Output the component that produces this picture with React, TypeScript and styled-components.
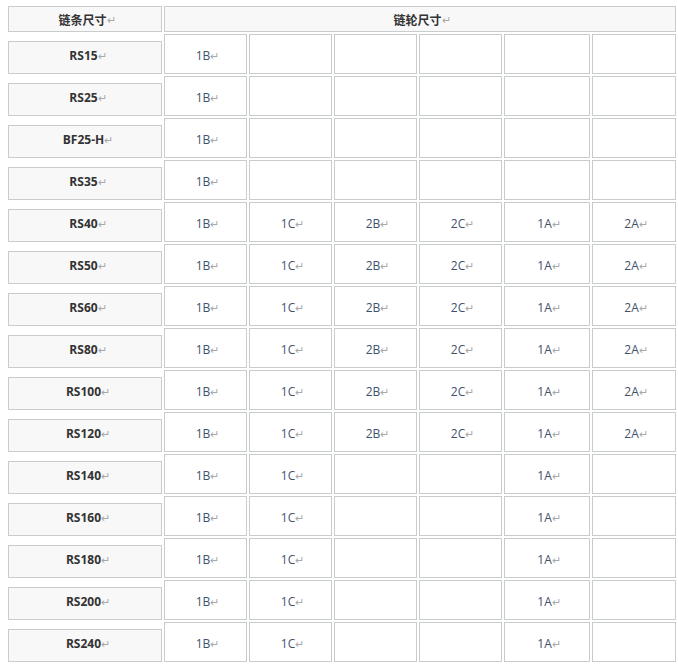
import React from "react";
import styled, { createGlobalStyle } from "styled-components";

const GlobalStyle = createGlobalStyle`
  body {
    margin: 0;
    background: #fff;
    font-family: "Open Sans", "Noto Sans CJK SC", sans-serif;
    font-size: 12px;
  }
`;

const Grid = styled.div`
  display: grid;
  grid-template-columns: 154px 83px 83px 83px 83px 86px 84px;
  grid-auto-rows: 40px;
  grid-template-rows: 26px;
  gap: 2px;
  padding: 6px 0 0 8px;
  width: max-content;
`;

const Cell = styled.div`
  box-sizing: border-box;
  border: 1px solid #c8cdcc;
  display: flex;
  align-items: center;
  justify-content: center;
  white-space: nowrap;
`;

const HeadCell = styled(Cell)<{ $span?: number }>`
  grid-column: span ${(p) => p.$span ?? 1};
  background: #f8f8f8;
  color: #333;
  font-weight: 700;
  font-family: "Noto Sans CJK SC", sans-serif;
  font-size: 12px;
  padding-left: 4px;
`;

const LabelCell = styled(Cell)`
  align-self: end;
  height: 33px;
  background: #f8f8f8;
  color: #333;
  font-weight: 700;
  padding: 0 0 4px 6px;
`;

const DataCell = styled(Cell)`
  background: #fff;
  color: #3f526c;
  padding: 3px 0 0 4px;
`;

const Mark = styled.span`
  color: #a8a8a8;
  font-size: 11px;
  font-weight: 400;
`;

const full = ["1B", "1C", "2B", "2C", "1A", "2A"];
const partial = ["1B", "1C", "", "", "1A", ""];
const single = ["1B", "", "", "", "", ""];

const rows: [string, string[]][] = [
  ["RS15", single],
  ["RS25", single],
  ["BF25-H", single],
  ["RS35", single],
  ["RS40", full],
  ["RS50", full],
  ["RS60", full],
  ["RS80", full],
  ["RS100", full],
  ["RS120", full],
  ["RS140", partial],
  ["RS160", partial],
  ["RS180", partial],
  ["RS200", partial],
  ["RS240", partial],
];

const Text = ({ children }: { children: string }) => (
  <>
    {children}
    <Mark>↵</Mark>
  </>
);

export default function App() {
  return (
    <>
      <GlobalStyle />
      <Grid>
        <HeadCell>
          <Text>链条尺寸</Text>
        </HeadCell>
        <HeadCell $span={6}>
          <Text>链轮尺寸</Text>
        </HeadCell>
        {rows.map(([name, sizes]) => (
          <React.Fragment key={name}>
            <LabelCell>
              <Text>{name}</Text>
            </LabelCell>
            {sizes.map((s, i) => (
              <DataCell key={i}>{s && <Text>{s}</Text>}</DataCell>
            ))}
          </React.Fragment>
        ))}
      </Grid>
    </>
  );
}
